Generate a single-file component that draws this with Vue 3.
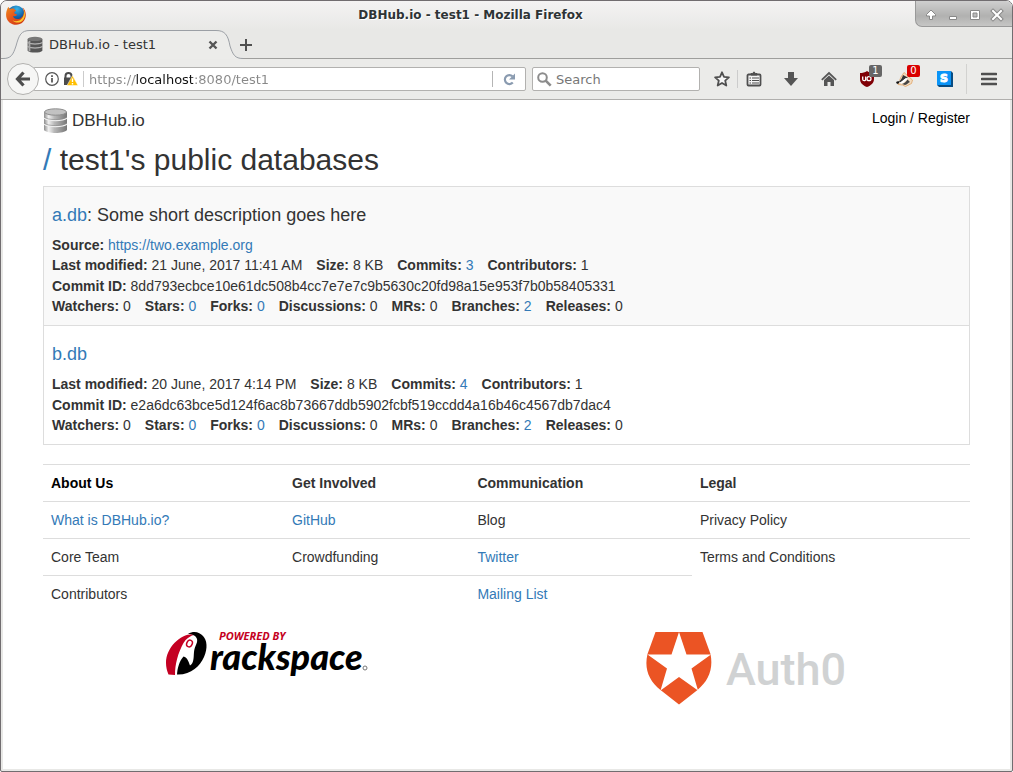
<script setup>
const url = 'https://localhost:8080/test1'

const databases = [
  {
    name: 'a.db',
    description: 'Some short description goes here',
    source: 'https://two.example.org',
    modified: '21 June, 2017 11:41 AM',
    size: '8 KB',
    commits: 3,
    contributors: 1,
    commitId: '8dd793ecbce10e61dc508b4cc7e7e7c9b5630c20fd98a15e953f7b0b58405331',
    branches: 2
  },
  {
    name: 'b.db',
    modified: '20 June, 2017 4:14 PM',
    size: '8 KB',
    commits: 4,
    contributors: 1,
    commitId: 'e2a6dc63bce5d124f6ac8b73667ddb5902fcbf519ccdd4a16b46c4567db7dac4',
    branches: 2
  }
]

const footerHeads = ['About Us', 'Get Involved', 'Communication', 'Legal']
const footerRows = [
  [
    { text: 'What is DBHub.io?', link: true },
    { text: 'GitHub', link: true },
    { text: 'Blog' },
    { text: 'Privacy Policy' }
  ],
  [
    { text: 'Core Team' },
    { text: 'Crowdfunding' },
    { text: 'Twitter', link: true },
    { text: 'Terms and Conditions' }
  ],
  [{ text: 'Contributors' }, { text: '' }, { text: 'Mailing List', link: true }]
]
</script>

<template>
  <div class="window">
    <header class="titlebar">
      <svg class="fox" width="20" height="20" viewBox="0 0 20 20" aria-hidden="true">
        <defs>
          <radialGradient id="globe" cx=".55" cy=".2" r=".8">
            <stop offset="0" stop-color="#35b3e6" />
            <stop offset=".5" stop-color="#1567ae" />
            <stop offset="1" stop-color="#0a2c66" />
          </radialGradient>
          <linearGradient id="fur" x1="0" y1="0" x2="1" y2="1">
            <stop offset="0" stop-color="#f08a1c" />
            <stop offset=".45" stop-color="#e4541a" />
            <stop offset="1" stop-color="#c8300f" />
          </linearGradient>
        </defs>
        <circle cx="10" cy="9.5" r="9" fill="url(#globe)" />
        <path d="M1.500 3.500C.3 6-.2 9 .3 12 1.300 16.800 5.300 19.800 10 19.800c5.500 0 9.800-4.300 9.800-9.800 0-3.300-1.200-6-3.300-7.500 1.300 2 1.700 4 1.200 6.200-.7 3.300-3.500 5.500-6.500 5.300-2.400-.2-4-1.400-4.300-3 1.200.5 2.500.2 3.600-.6.8-.5.400-1.200-.500-1.300-1-.1-1.700-.6-1.800-1.300 0-.9 1.600-1.300 2-2.200-.9-.4-1.700-1.100-2.400-2C6 3.300 4.700 3.400 3.700 4 3 3.500 2.600 2.700 2.700 1.800 2.200 2.300 1.800 2.900 1.500 3.500z" fill="url(#fur)" />
        <path d="M17.500 4.500c1.200 3.800.2 8-3 10.200-2.500 1.800-5.600 1.900-8 .5 2 2.600 6.600 3.300 9.700.8 3.200-2.700 3.600-7.600 1.300-11.500z" fill="#fcc62e" />
      </svg>
      <h1 class="window-title">DBHub.io - test1 - Mozilla Firefox</h1>
      <div class="controls">
        <button type="button" aria-label="Shade">
          <svg width="14" height="14" viewBox="0 0 14 14"><path d="M7 2L2.500 6.500v1.500h3v3.500h3V8h3V6.500z" fill="#fff" stroke="#888" /></svg>
        </button>
        <button type="button" aria-label="Minimize">
          <svg width="14" height="14" viewBox="0 0 14 14"><path d="M3.500 8.500h7v3h-7z" fill="#fff" stroke="#888" /></svg>
        </button>
        <button type="button" aria-label="Maximize">
          <svg width="14" height="14" viewBox="0 0 14 14"><path d="M2.500 2.500h9v9h-9z" fill="#fff" stroke="#888" /><path d="M5 5h4v4H5z" fill="#bbb" stroke="#888" /></svg>
        </button>
        <button type="button" aria-label="Close">
          <svg width="14" height="14" viewBox="0 0 14 14"><path d="M3 3l8 8M11 3l-8 8" stroke="#888" stroke-width="4" stroke-linecap="square" /><path d="M3 3l8 8M11 3l-8 8" stroke="#fff" stroke-width="2" stroke-linecap="square" /></svg>
        </button>
      </div>
    </header>

    <nav class="tabstrip" aria-label="Tabs">
      <div class="tab">
        <svg class="tab-shape" width="240" height="29" viewBox="0 0 240 29" aria-hidden="true">
          <path d="M0 28.500C8 28.500 10 25 13 16 16 5 18 .5 27 .5H213C222 .5 225 5 227 16 230 25 232 28.500 240 28.500V29H0z" fill="#ececea" />
          <path d="M0 28.500C8 28.500 10 25 13 16 16 5 18 .5 27 .5H213C222 .5 225 5 227 16 230 25 232 28.500 240 28.500" fill="none" stroke="#9b9fa5" />
        </svg>
        <svg class="tab-icon" width="16" height="17" viewBox="0 0 26 26" aria-hidden="true">
          <path d="M1 4v19c3 4 21 4 24 0V4z" fill="#565656" />
          <path d="M1 10c5 3 19 3 24 0M1 16.500c5 3 19 3 24 0" fill="none" stroke="#d8d8d8" stroke-width="1.500" />
          <path d="M4 7v17" stroke="#aaa" stroke-width="3" />
          <ellipse cx="13" cy="4" rx="12" ry="3.500" fill="#777" />
        </svg>
        <span class="tab-title">DBHub.io - test1</span>
        <button type="button" class="tab-close" aria-label="Close tab">
          <svg width="10" height="10" viewBox="0 0 10 10"><path d="M1.500 1.500l7 7M8.500 1.500l-7 7" stroke="#555" stroke-width="2.400" /></svg>
        </button>
      </div>
      <button type="button" class="new-tab" aria-label="New tab">
        <svg width="12" height="12" viewBox="0 0 12 12"><path d="M6 0v12M0 6h12" stroke="#505050" stroke-width="2" /></svg>
      </button>
    </nav>

    <div class="navbar">
      <button type="button" class="back" aria-label="Back">
        <svg width="16" height="16" viewBox="0 0 16 16"><path d="M8.500 1.500L2.500 8l6 6.500M3 8h12" fill="none" stroke="#4d4d4d" stroke-width="3.200" /></svg>
      </button>
      <div class="urlbar">
        <svg width="14" height="14" viewBox="0 0 14 14" aria-hidden="true">
          <circle cx="7" cy="7" r="6.300" fill="none" stroke="#555" stroke-width="1.200" />
          <path d="M7 6v4.500M7 3.300v1.600" stroke="#444" stroke-width="1.600" />
        </svg>
        <svg class="lock" width="15" height="14" viewBox="0 0 15 14" aria-hidden="true">
          <path d="M2.500 6V4a3 3 0 0 1 6 0v2" fill="none" stroke="#4c4c4c" stroke-width="2" />
          <path d="M1 5.500h8.500v7.500H1z" fill="#4c4c4c" />
          <path d="M9.500 3.500L15 13.500H4z" fill="#ffbf00" stroke="#fff" stroke-width=".5" />
          <path d="M9.500 6.500v3.500M9.500 11v1.400" stroke="#fff" stroke-width="1.400" />
        </svg>
        <input class="url" type="text" aria-label="Address" :value="url" />
        <button type="button" class="reload" aria-label="Reload">
          <svg width="13" height="13" viewBox="0 0 13 13"><path d="M9.800 9.500A4.500 4.500 0 1 1 9.500 3.300" fill="none" stroke="#8a9bb0" stroke-width="2.200" /><path d="M12 .5v6H6z" fill="#8a9bb0" /></svg>
        </button>
      </div>
      <label class="search">
        <svg width="15" height="15" viewBox="0 0 15 15" aria-hidden="true"><circle cx="5.500" cy="5.500" r="4.300" fill="none" stroke="#8c8c8c" stroke-width="2" /><path d="M8.700 8.700l5 5" stroke="#8c8c8c" stroke-width="2.600" /></svg>
        <input type="text" aria-label="Search" placeholder="Search" />
      </label>
      <div class="tools">
        <button type="button" class="tool star" aria-label="Bookmark this page">
          <svg width="16" height="16" viewBox="0 0 16 16"><path d="M8 1.300l2 4.500 4.900.5-3.700 3.300 1.100 4.900L8 12l-4.300 2.500 1.100-4.900L1.100 6.300 6 5.800z" fill="#f6f6f6" stroke="#4f4f4f" stroke-width="1.800" stroke-linejoin="round" /></svg>
        </button>
        <button type="button" class="tool" aria-label="Bookmarks">
          <svg width="16" height="16" viewBox="0 0 16 16"><path d="M2.500 3.500h11a1 1 0 0 1 1 1v9a1 1 0 0 1-1 1h-11a1 1 0 0 1-1-1v-9a1 1 0 0 1 1-1z" fill="#f4f4f4" stroke="#4f4f4f" stroke-width="1.800" /><path d="M5 4V2.500h1.500L8 .8l1.500 1.700H11V4z" fill="#4f4f4f" stroke="#4f4f4f" /><path d="M3.500 7h1.500M6 7h7M3.500 9.500h1.500M6 9.500h7M3.500 12h1.500M6 12h7" stroke="#4f4f4f" stroke-width="1.200" /></svg>
        </button>
        <button type="button" class="tool" aria-label="Downloads">
          <svg width="16" height="16" viewBox="0 0 16 16"><path d="M5 1h6v6h4l-7 8-7-8h4z" fill="#555" /></svg>
        </button>
        <button type="button" class="tool" aria-label="Home">
          <svg width="16" height="16" viewBox="0 0 16 16"><path d="M3 9l5-4.500L13 9v6H9.500v-4h-3v4H3z" fill="#555" /><path d="M.8 8.800L8 2l7.200 6.800" fill="none" stroke="#555" stroke-width="1.800" /></svg>
        </button>
        <button type="button" class="tool" aria-label="uBlock Origin">
          <svg width="16" height="16" viewBox="0 0 16 16"><path d="M8 0c2 1.500 4.500 2 7 2v6c0 4-3 6.500-7 8-4-1.500-7-4-7-8V2c2.500 0 5-.5 7-2z" fill="#800006" /><path d="M3.700 5.500v2.700a1.500 1.500 0 0 0 3 0V5.500v4.300" fill="none" stroke="#fff" stroke-width="1.300" /><circle cx="10" cy="7.700" r="2" fill="none" stroke="#fff" stroke-width="1.300" /></svg>
          <span class="badge grey">1</span>
        </button>
        <button type="button" class="tool" aria-label="Privacy Badger">
          <svg width="18" height="16" viewBox="0 0 18 16">
            <path d="M5 6l3-4.500L16.500 9l-1 3.500-6 3-3-1.500-4.500-.5z" fill="#f3dcc0" stroke="#e0a468" stroke-width=".8" />
            <path d="M1.500 11.500L8 5.500l4 2-5.500 5z" fill="#fff" />
            <path d="M2.500 10.500c2.500-1 3.500-3.500 4.500-6.500l3 1.500 2 1.500c-3 0-4 2-6.500 4.500z" fill="#333" />
            <path d="M4 11.500l6-4.500 1.500 1L6 12.500z" fill="#fff" />
            <path d="M6 13c3-.5 4-2.500 5.500-4.500L14 11c-2 1-3 2.500-5 3z" fill="#444" />
            <path d="M0 11l2.500-1 1 2L1 13z" fill="#111" />
          </svg>
          <span class="badge red">0</span>
        </button>
        <button type="button" class="tool stylish" aria-label="Stylish">
          <svg width="16" height="16" viewBox="0 0 16 16" aria-hidden="true"><path d="M0 14h14V0l2 2v14H2z" fill="#084c82" /><path d="M0 0h14v14H0z" fill="#0a94f7" /><text x="7" y="11" text-anchor="middle" class="s-letter">S</text></svg>
        </button>
        <button type="button" class="tool menu" aria-label="Open menu">
          <svg width="16" height="16" viewBox="0 0 16 16"><path d="M1 3h14M1 8h14M1 13h14" stroke="#4f4f4f" stroke-width="2.600" stroke-linecap="round" /></svg>
        </button>
      </div>
    </div>

    <main class="page">
      <div class="topline">
        <div class="brand">
          <svg width="26" height="26" viewBox="0 0 26 26" aria-hidden="true">
            <defs>
              <linearGradient id="steel" x1="0" x2="1">
                <stop offset="0" stop-color="#8d8d8d" />
                <stop offset=".2" stop-color="#f0f0f0" />
                <stop offset=".45" stop-color="#b8b8b8" />
                <stop offset="1" stop-color="#777" />
              </linearGradient>
            </defs>
            <path d="M1 4v18c3 4 20 4 23 0V4z" fill="url(#steel)" />
            <path d="M1 10c4 3.500 19 3.500 23 0M1 16c4 3.500 19 3.500 23 0" fill="none" stroke="#eee" stroke-width="1.200" />
            <path d="M1 9c4 3.500 19 3.500 23 0M1 15c4 3.500 19 3.500 23 0" fill="none" stroke="#888" stroke-width=".6" />
            <ellipse cx="12.500" cy="4" rx="11" ry="3.200" fill="#c2c2c2" stroke="#8d8d8d" />
          </svg>
          <span>DBHub.io</span>
        </div>
        <a class="login" href="#login">Login / Register</a>
      </div>

      <h2 class="heading"><a href="#root">/</a> test1's public databases</h2>

      <table class="databases">
        <tbody>
          <tr v-for="db in databases" :key="db.name">
            <td>
              <h3><a href="#db">{{ db.name }}</a><template v-if="db.description">: {{ db.description }}</template></h3>
              <p v-if="db.source" class="line"><span><b>Source:</b> <a href="#source">{{ db.source }}</a></span></p>
              <p class="line">
                <span><b>Last modified:</b> {{ db.modified }}</span>
                <span><b>Size:</b> {{ db.size }}</span>
                <span><b>Commits:</b> <a href="#commits">{{ db.commits }}</a></span>
                <span><b>Contributors:</b> {{ db.contributors }}</span>
              </p>
              <p class="line commit"><span><b>Commit ID:</b> {{ db.commitId }}</span></p>
              <p class="line">
                <span><b>Watchers:</b> 0</span>
                <span><b>Stars:</b> <a href="#stars">0</a></span>
                <span><b>Forks:</b> <a href="#forks">0</a></span>
                <span><b>Discussions:</b> 0</span>
                <span><b>MRs:</b> 0</span>
                <span><b>Branches:</b> <a href="#branches">{{ db.branches }}</a></span>
                <span><b>Releases:</b> 0</span>
              </p>
            </td>
          </tr>
        </tbody>
      </table>

      <table class="links">
        <thead>
          <tr><th v-for="head in footerHeads" :key="head" scope="col">{{ head }}</th></tr>
        </thead>
        <tbody>
          <tr v-for="(row, r) in footerRows" :key="r">
            <td v-for="(cell, c) in row" :key="c">
              <a v-if="cell.link" href="#link">{{ cell.text }}</a>
              <template v-else>{{ cell.text }}</template>
            </td>
          </tr>
        </tbody>
      </table>

      <div class="sponsors">
        <svg width="202" height="54" viewBox="0 0 202 54" role="img" aria-label="Powered by Rackspace">
          <path d="M29 6.500C17 4 0 18 0 35c0 4 1 8 2.500 11.500L9 47C9 36 12 25 17.500 15 20 10.500 24 8 29 6.500z" fill="#c40022" />
          <path d="M22 6C28 2 34 4.500 37 8c4 4 5 12 1 21-4 9-13 18-27 17.500.5-6 2-13 6.500-18 4 1 5 5 6.500 9 4-2 3.500-8 4-13.500.5-6 4-9 3-13-1-3-4-5-9-5z" fill="#000" />
          <ellipse cx="23.500" cy="15.500" rx="3" ry="4" fill="#c40022" stroke="#fff" stroke-width="3" transform="rotate(25 23.500 15.500)" />
          <ellipse cx="23.500" cy="15.500" rx="2.700" ry="3.500" fill="#fff" stroke="#c40022" stroke-width="1.500" transform="rotate(25 23.500 15.500)" />
          <text x="53" y="12" class="powered">POWERED BY</text>
          <text x="44" y="42" class="rackspace">rackspace</text>
          <circle cx="199" cy="40" r="2" fill="none" stroke="#777" />
        </svg>
        <svg width="202" height="80" viewBox="-1 -3 202 80" role="img" aria-label="Auth0">
          <path d="M9.500 1h47l8 22c3 15-2 27-13 36L33 73.500 14.500 59C3 50-2 38 1.500 23z" fill="#eb5424" />
          <path d="M33 1l7.500 22.500H65L45.500 37.500 52 59.500 33 46 14.500 59.500l6.500-22L1.500 23.500h24z" fill="#fff" />
          <text x="80" y="54" class="auth">Auth0</text>
        </svg>
      </div>
    </main>
  </div>
</template>

<style>
body {
  background: #fff;
}
</style>

<style scoped>
* {
  box-sizing: border-box;
}

.window {
  display: flex;
  flex-direction: column;
  min-height: 100vh;
  border: 1px solid #716d70;
  border-radius: 7px 7px 2px 2px;
  overflow: hidden;
  background: #e8e8e6;
  font-family: "DejaVu Sans", sans-serif;
  font-size: 13px;
}

button {
  display: flex;
  align-items: center;
  justify-content: center;
  padding: 0;
  border: 0;
  background: none;
  font: inherit;
}

input {
  min-width: 0;
  padding: 0;
  border: 0;
  outline: 0;
  background: none;
  font: inherit;
}

.titlebar {
  display: flex;
  align-items: flex-start;
  height: 29px;
  padding-left: 5px;
  background: linear-gradient(#f4f3f3, #e8e8e6);
}

.fox {
  margin-top: 4px;
}

.window-title {
  flex: 1;
  margin: 5px 0 0;
  color: #2e3436;
  font-size: 12px;
  line-height: 18px;
  text-align: center;
  text-shadow: 1px 1px #fff;
}

.controls {
  display: flex;
  gap: 8px;
  height: 26px;
  padding: 2px 8px 0;
  border: solid #999;
  border-width: 0 0 1px 1px;
  border-bottom-left-radius: 7px;
  background: linear-gradient(#cfcfcf, #b1b1b0 60%, #c6c6c5);
}

.tabstrip {
  display: flex;
  height: 29px;
  padding-left: 2px;
  border-bottom: 1px solid #9e9e9c;
}

.tab {
  position: relative;
  display: flex;
  align-items: center;
  width: 237px;
  height: 29px;
  padding: 0 22px 0 24px;
}

.tab-shape {
  position: absolute;
  top: 0;
  left: 0;
}

.tab-icon,
.tab-title,
.tab-close {
  position: relative;
}

.tab-title {
  flex: 1;
  margin-left: 6px;
  color: #333;
}

.new-tab {
  position: relative;
  width: 12px;
  height: 29px;
}

.navbar {
  display: flex;
  align-items: center;
  height: 41px;
  padding: 0 11px 0 6px;
  border-bottom: 1px solid #b0afad;
  background: #ebebe9;
}

.back {
  position: relative;
  z-index: 1;
  width: 32px;
  height: 32px;
  border: 1px solid #b2b1af;
  border-radius: 50%;
  background: #f6f6f5;
}

.urlbar {
  display: flex;
  flex: 1;
  align-items: center;
  height: 24px;
  margin-left: -6px;
  padding-left: 11px;
  border: 1px solid #b2b1af;
  border-radius: 2px;
  background: #fff;
}

.lock {
  margin-left: 4px;
}

.url {
  flex: 1;
  height: 16px;
  margin-left: 5px;
  padding-left: 5px;
  border-left: 1px solid #ccc;
  background: linear-gradient(90deg, #888 51px, #111 51px 109px, #888 109px) text;
  color: transparent;
}

.reload {
  width: 33px;
  height: 16px;
  border-left: 1px solid #b5b5b5;
}

.search {
  display: flex;
  align-items: center;
  width: 168px;
  height: 24px;
  margin-left: 6px;
  padding-left: 4px;
  border: 1px solid #b2b1af;
  border-radius: 2px;
  background: #fff;
}

.search input {
  flex: 1;
  margin-left: 4px;
}

.search input::placeholder {
  color: #777;
  opacity: 1;
}

.tools {
  display: flex;
  align-items: center;
  margin-left: 7px;
}

.tool {
  position: relative;
  width: 38px;
  height: 30px;
}

.star {
  width: 31px;
  height: 18px;
  border-right: 1px solid #ccc;
}

.star + .tool {
  width: 31px;
  margin-right: 3px;
}

.stylish {
  width: 43px;
  border-right: 1px solid #d2d2d0;
}

.menu {
  width: 24px;
  margin-left: 10px;
}

.s-letter {
  fill: #fff;
  stroke: #fff;
  font-family: "DejaVu Sans", sans-serif;
  font-size: 11px;
  font-weight: bold;
}

.badge {
  position: absolute;
  top: 1px;
  right: 4px;
  width: 13px;
  border-radius: 2px;
  color: #fff;
  font-size: 10px;
  line-height: 12px;
}

.grey {
  background: #666;
}

.red {
  background: #d90000;
}

.page {
  flex: 1;
  margin: 0 2px 2px;
  padding: 8px 40px 0;
  background: #fff;
  color: #333;
  font-family: "Liberation Sans", Arial, sans-serif;
  font-size: 14px;
  line-height: 20px;
}

a {
  color: #337ab7;
  text-decoration: none;
}

.topline {
  display: flex;
  justify-content: space-between;
}

.brand {
  display: flex;
  align-items: center;
  gap: 3px;
  font-size: 17px;
  line-height: 26px;
}

.login {
  color: #000;
}

.heading {
  margin: 9px 0 10px;
  font-size: 30px;
  font-weight: 400;
  line-height: 33px;
}

table {
  width: 100%;
  border-collapse: collapse;
}

.databases {
  margin-bottom: 19px;
}

.databases td {
  padding: 8px 8px 9px;
  border: 1px solid #ddd;
}

.databases tr:first-child {
  background: #f9f9f9;
}

h3 {
  margin: 10px 0;
  font-size: 18px;
  font-weight: 400;
  line-height: 20px;
}

.line {
  display: flex;
  flex-wrap: wrap;
  gap: 0 14px;
  margin: 0;
}

.commit {
  padding-top: 1px;
}

.links {
  table-layout: fixed;
}

.links th,
.links td {
  padding: 8px;
  border-top: 1px solid #ddd;
  text-align: left;
}

.links th:nth-child(1) {
  width: 26%;
  color: #000;
}

.links th:nth-child(2) {
  width: 20%;
}

.links th:nth-child(3) {
  width: 24%;
}

.sponsors {
  display: grid;
  grid-template-columns: 1fr 1fr;
  justify-items: center;
  margin: 16px -16px 0;
}

.powered {
  fill: #c40022;
  font: italic bold 11px "Open Sans", sans-serif;
}

.rackspace {
  fill: #000;
  font: italic 900 36px Lato, sans-serif;
}

.auth {
  fill: #d0d2d3;
  font: 500 45px Roboto, sans-serif;
}
</style>
